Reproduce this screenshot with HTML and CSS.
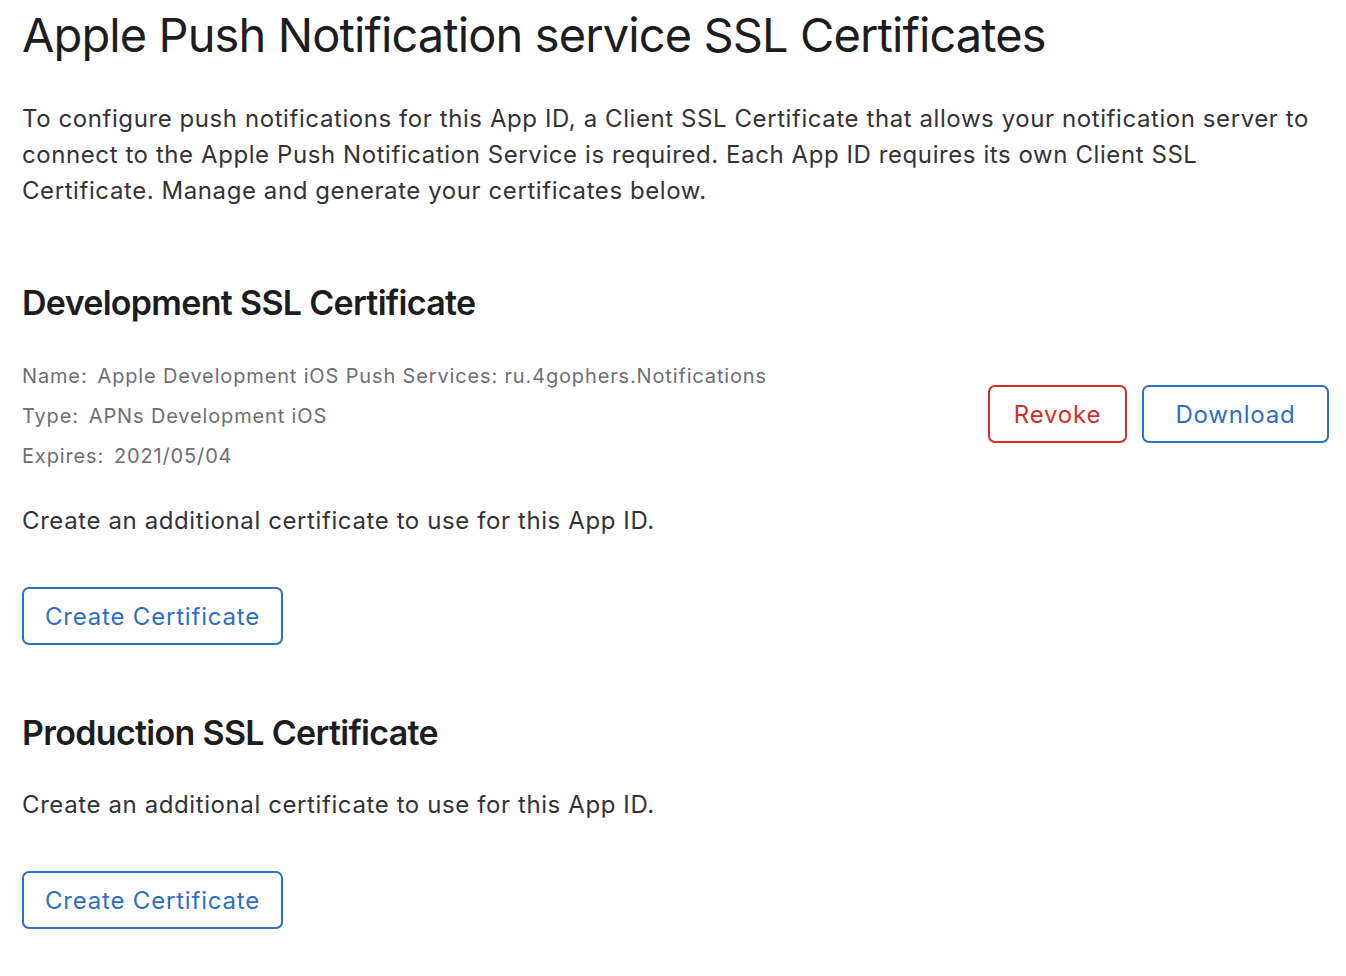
FILE: index.html
```html
<!DOCTYPE html>
<html lang="en">
<head>
<meta charset="utf-8">
<title>Apple Push Notification service SSL Certificates</title>
<link rel="stylesheet" href="styles.css">
</head>
<body>
<main class="page">
  <h1 class="title">Apple Push Notification service SSL Certificates</h1>
  <p class="intro">To configure push notifications for this App ID, a Client SSL Certificate that allows your notification server to connect to the Apple Push Notification Service is required. Each App ID requires its own Client SSL Certificate. Manage and generate your certificates below.</p>

  <section class="cert cert-dev">
    <h2 class="cert-title">Development SSL Certificate</h2>
    <div class="cert-row">
      <dl class="meta">
        <div class="meta-line"><dt>Name:</dt><dd>Apple Development iOS Push Services: ru.4gophers.Notifications</dd></div>
        <div class="meta-line"><dt>Type:</dt><dd>APNs Development iOS</dd></div>
        <div class="meta-line"><dt>Expires:</dt><dd>2021/05/04</dd></div>
      </dl>
      <div class="actions">
        <button class="btn btn-revoke" type="button">Revoke</button>
        <button class="btn btn-download" type="button">Download</button>
      </div>
    </div>
    <p class="note">Create an additional certificate to use for this App ID.</p>
    <button class="btn btn-create" type="button">Create Certificate</button>
  </section>

  <section class="cert cert-prod">
    <h2 class="cert-title">Production SSL Certificate</h2>
    <p class="note">Create an additional certificate to use for this App ID.</p>
    <button class="btn btn-create" type="button">Create Certificate</button>
  </section>
</main>
</body>
</html>
```

FILE: styles.css
```css
* { box-sizing: border-box; }

html, body {
  margin: 0;
  padding: 0;
  background: #ffffff;
}

body {
  font-family: Inter, "Noto Sans", "Liberation Sans", sans-serif;
  color: #1d1d1f;
}

.page {
  padding: 6px 17px 40px 22px;
}

.title {
  margin: 0;
  font-size: 47px;
  line-height: 58px;
  font-weight: 400;
  letter-spacing: -0.9px;
  color: #1d1d1f;
}

.intro {
  margin: 37px 0 0;
  font-size: 24px;
  line-height: 36px;
  color: #333336;
  letter-spacing: 0.58px;
}

.cert-title {
  margin: 0;
  font-size: 34px;
  line-height: 44px;
  font-weight: 600;
  letter-spacing: -0.7px;
  color: #1d1d1f;
}

.cert-dev { margin-top: 72px; }
.cert-prod { margin-top: 66px; }

.cert-row {
  display: flex;
  align-items: center;
  justify-content: space-between;
  margin-top: 31px;
}

.meta {
  margin: 0;
  font-size: 20px;
  line-height: 40px;
  color: #6e6e73;
  letter-spacing: 0.85px;
}

.meta-line {
  display: flex;
  gap: 10px;
}

.meta dt, .meta dd {
  margin: 0;
}

.actions {
  display: flex;
  gap: 15px;
  padding-bottom: 4px;
}

.note {
  margin: 27px 0 0;
  font-size: 24px;
  line-height: 36px;
  color: #333336;
  letter-spacing: 0.6px;
}

.cert-prod .note { margin-top: 32px; }

.btn {
  display: inline-flex;
  align-items: center;
  justify-content: center;
  height: 58px;
  padding: 0 16px;
  background: #ffffff;
  border: 2px solid #2d6fc4;
  border-radius: 7px;
  font-family: inherit;
  font-size: 24px;
  letter-spacing: 0.8px;
  color: #2d6fc4;
  cursor: pointer;
}

.btn-create {
  margin-top: 48px;
  width: 261px;
}

.btn-revoke {
  width: 139px;
  border-color: #d22f2d;
  color: #d22f2d;
}

.btn-download {
  width: 187px;
}
```
